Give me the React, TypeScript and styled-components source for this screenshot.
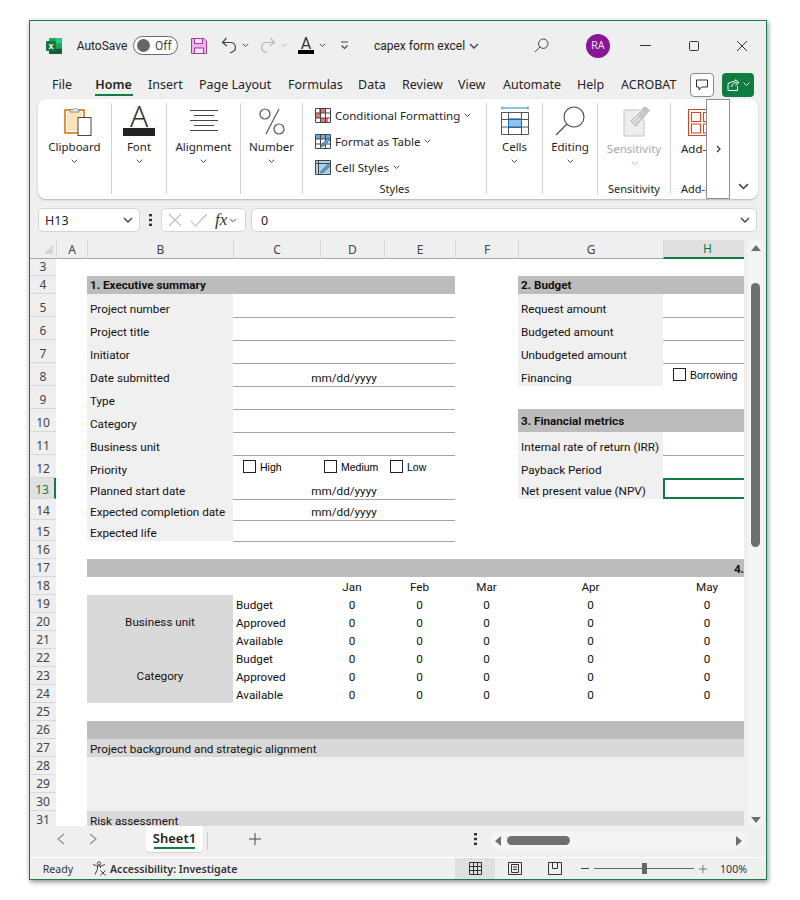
import styled, { createGlobalStyle } from 'styled-components'

const UI_FONT = '"Noto Sans", "Open Sans", sans-serif'
const SHEET_FONT = 'Roboto, "Noto Sans", sans-serif'
const GREEN = '#107c41'

const GlobalStyle = createGlobalStyle`
  html, body { margin: 0; background: #fff; }
  body { font-family: ${UI_FONT}; color: #242424; }
  * { box-sizing: border-box; }
`

const Page = styled.div`
  padding: 20px 33px 20px 29px;
`

const Window = styled.div`
  width: 738px;
  height: 860px;
  background: #efefef;
  border: 1px solid #1f7a4a;
  box-shadow: 1px 2px 5px rgba(0, 0, 0, 0.45);
  display: flex;
  flex-direction: column;
`

/* title bar */
const TitleBar = styled.div`
  height: 49px;
  display: flex;
  align-items: center;
  font-family: ${SHEET_FONT};
  font-size: 12px;
`

const Slot = styled.div<{ $ml: number; $w?: number }>`
  margin-left: ${(p) => p.$ml}px;
  ${(p) => (p.$w ? `width: ${p.$w}px;` : '')}
  flex: none;
  display: flex;
  align-items: center;
  justify-content: center;
  white-space: nowrap;
`

const Toggle = styled.div`
  width: 45px;
  height: 19px;
  border: 1px solid #6a6a6a;
  border-radius: 10px;
  background: #fff;
  display: flex;
  align-items: center;
  padding: 0 3px;
  gap: 5px;
  font-size: 12px;
  color: #444;
`

const ToggleKnob = styled.span`
  width: 13px;
  height: 13px;
  border-radius: 50%;
  background: #666;
`

const FontColorIcon = styled.div`
  width: 16px;
  display: flex;
  flex-direction: column;
  align-items: center;
`

const FontColorLetter = styled.span`
  font-size: 16px;
  line-height: 13px;
  color: #333;
`

const ColorBar = styled.span`
  width: 100%;
  height: 4px;
  background: #000;
`

const Avatar = styled.div`
  width: 24px;
  height: 24px;
  border-radius: 50%;
  background: #881798;
  color: #f3dcf6;
  font-size: 10.5px;
  display: flex;
  align-items: center;
  justify-content: center;
`

/* ribbon tabs */
const TabBar = styled.div`
  height: 29px;
  display: flex;
  align-items: center;
  font-size: 12.5px;
`

const RibbonTab = styled.div<{ $ml: number; $w: number; $active?: boolean }>`
  position: relative;
  margin-left: ${(p) => p.$ml}px;
  width: ${(p) => p.$w}px;
  flex: none;
  height: 29px;
  line-height: 30px;
  text-align: center;
  white-space: nowrap;
  font-weight: ${(p) => (p.$active ? 600 : 400)};

  ${(p) =>
    p.$active
      ? `&::after {
          content: '';
          position: absolute;
          left: 0;
          right: -1px;
          bottom: 3px;
          height: 2px;
          background: ${GREEN};
        }`
      : ''}
`

const CommentButton = styled.div`
  margin-left: 14px;
  width: 24px;
  height: 24px;
  background: #fff;
  border: 1px solid #8a8a8a;
  border-radius: 4px;
  display: flex;
  align-items: center;
  justify-content: center;
`

const ShareButton = styled.div`
  margin-left: 8px;
  width: 32px;
  height: 24px;
  background: ${GREEN};
  border-radius: 4px;
  display: flex;
  align-items: center;
  justify-content: center;
  gap: 3px;
`

/* ribbon */
const Ribbon = styled.div`
  position: relative;
  height: 100px;
  margin: 0 8px;
  padding: 4px 0 5px;
  background: #fff;
  border-radius: 8px;
  box-shadow: 0 1px 2px rgba(0, 0, 0, 0.25);
  display: flex;
`

const RibbonGroup = styled.div<{ $w: number; $start?: boolean; $last?: boolean }>`
  width: ${(p) => p.$w}px;
  flex: none;
  display: flex;
  flex-direction: column;
  align-items: ${(p) => (p.$start ? 'flex-start' : 'center')};
  padding-left: ${(p) => (p.$start ? '10px' : '0')};
  border-right: ${(p) => (p.$last ? 'none' : '1px solid #d2d2d2')};
  font-size: 11.5px;
`

const GroupIcon = styled.div<{ $tall?: boolean; $inset?: number }>`
  height: ${(p) => (p.$tall ? 38 : 36)}px;
  padding-left: ${(p) => p.$inset ?? 0}px;
  display: flex;
  align-items: center;
  justify-content: center;
`

const GroupText = styled.div<{ $muted?: boolean }>`
  line-height: 16px;
  white-space: nowrap;
  color: ${(p) => (p.$muted ? '#a8a8a8' : '#242424')};
`

const GroupChevron = styled.div`
  height: 12px;
  display: flex;
  align-items: center;
  justify-content: center;
`

const GroupName = styled.div`
  margin-top: auto;
  margin-bottom: -3px;
  line-height: 16px;
  font-size: 11px;
  white-space: nowrap;
`

const BigLetterIcon = styled.div`
  width: 32px;
  height: 30px;
  display: flex;
  flex-direction: column;
  align-items: center;
  justify-content: flex-end;
`

const BigLetter = styled.span`
  font-size: 30px;
  line-height: 30px;
  margin: -5px 0 -3px;
  font-weight: 300;
  color: #333;
`

const BigBar = styled.span`
  width: 100%;
  height: 8px;
  background: #222;
  flex: none;
`

const StyleList = styled.div`
  display: flex;
  flex-direction: column;
  width: 100%;
  padding: 2px 0 0 12px;
  gap: 6px;
`

const StyleRow = styled.div`
  height: 20px;
  display: flex;
  align-items: center;
  gap: 4px;
  white-space: nowrap;
`

const RibbonOverflow = styled.div`
  position: absolute;
  left: 668px;
  top: 0;
  width: 24px;
  height: 100px;
  background: #fff;
  border: 1px solid #8f8f8f;
  display: flex;
  align-items: center;
  justify-content: center;
`

const CollapseButton = styled.div`
  position: absolute;
  right: 9px;
  bottom: 9px;
  display: flex;
`

/* formula bar */
const FormulaBar = styled.div`
  height: 24px;
  margin: 9px 9px 0 8px;
  display: flex;
  align-items: stretch;
  font-size: 12.5px;
`

const FieldBox = styled.div<{ $w?: number; $ml?: number }>`
  ${(p) => (p.$w ? `width: ${p.$w}px; flex: none;` : 'flex: 1;')}
  margin-left: ${(p) => p.$ml ?? 0}px;
  background: #fff;
  border: 1px solid #d4d4d4;
  border-radius: 5px;
  display: flex;
  align-items: center;
  padding: 0 6px;
`

const FieldValue = styled.span<{ $inset?: number }>`
  flex: 1;
  padding-left: ${(p) => p.$inset ?? 0}px;
`

const FormulaDots = styled.div`
  width: 21px;
  flex: none;
  display: flex;
  align-items: center;
  justify-content: center;
`

const FxMark = styled.span`
  font-family: 'Liberation Serif', serif;
  font-style: italic;
  font-size: 17px;
  color: #333;
  margin: 0 2px 0 8px;
`

/* sheet */
const SheetArea = styled.div`
  height: 586px;
  margin-top: 8px;
  display: flex;
`

const GridViewport = styled.div`
  width: 714px;
  flex: none;
  overflow: hidden;
  background: #fff;
`

const columns = ['A', 'B', 'C', 'D', 'E', 'F', 'G', 'H']

const rowHeights: Record<number, number> = {
  3: 17, 4: 18, 5: 23, 6: 23, 7: 23, 8: 23, 9: 23, 10: 23, 11: 23, 12: 23, 13: 21, 14: 21, 15: 21,
  16: 18, 17: 18, 18: 18, 19: 18, 20: 18, 21: 18, 22: 18, 23: 18, 24: 18, 25: 18, 26: 18, 27: 18,
  28: 18, 29: 18, 30: 18, 31: 18,
}

const rowNumbers = Object.keys(rowHeights).map(Number)

const SheetGrid = styled.div`
  display: grid;
  width: 721px;
  grid-template-columns: 26px 31px 146px 87px 64px 71px 63px 145px 88px;
  grid-template-rows: 19px ${rowNumbers.map((r) => `${rowHeights[r]}px`).join(' ')};
  font-family: ${SHEET_FONT};
  font-size: 11.7px;
  color: #111;
`

const colLine = (col: string) => columns.indexOf(col) + 2
const rowLine = (row: number) => row - 1

const CornerCell = styled.div`
  grid-row: 1;
  grid-column: 1;
  background: #efefef;
  border-bottom: 1px solid #a8a8a8;
  display: flex;
  align-items: flex-end;
  justify-content: flex-end;
  padding: 0 3px 4px 0;
`

const CornerMark = styled.span`
  width: 0;
  height: 0;
  border-left: 9px solid transparent;
  border-bottom: 9px solid #d6d6d6;
`

const ColHead = styled.div<{ $col: string; $active?: boolean }>`
  grid-row: 1;
  grid-column: ${(p) => colLine(p.$col)};
  background: ${(p) => (p.$active ? '#e0e0e0' : '#efefef')};
  border-bottom: ${(p) => (p.$active ? `2px solid ${GREEN}` : '1px solid #a8a8a8')};
  border-left: 1px solid #d8d8d8;
  color: ${(p) => (p.$active ? GREEN : '#444')};
  font-family: ${UI_FONT};
  font-size: 12px;
  display: flex;
  align-items: center;
  justify-content: center;
`

const RowHead = styled.div<{ $row: number; $active?: boolean }>`
  grid-row: ${(p) => rowLine(p.$row)};
  grid-column: 1;
  background: ${(p) => (p.$active ? '#e0e0e0' : '#efefef')};
  border-bottom: 1px solid #d8d8d8;
  border-right: ${(p) => (p.$active ? `2px solid ${GREEN}` : 'none')};
  color: ${(p) => (p.$active ? GREEN : '#444')};
  font-family: ${UI_FONT};
  font-size: 12px;
  line-height: 16px;
  display: flex;
  align-items: flex-end;
  justify-content: center;
  overflow: hidden;
`

type Tone = 'none' | 'head' | 'label' | 'mid' | 'fill'

const toneColors: Record<Tone, string> = {
  none: 'transparent',
  head: '#bcbcbc',
  label: '#f0f0f0',
  mid: '#d9d9d9',
  fill: '#f0f0f0',
}

const Cell = styled.div<{
  $row: number
  $col: string
  $to?: string
  $rows?: number
  $tone?: Tone
  $line?: boolean
  $align?: 'left' | 'center' | 'right'
  $middle?: boolean
  $bold?: boolean
  $padRight?: number
}>`
  grid-row: ${(p) => rowLine(p.$row)} / span ${(p) => p.$rows ?? 1};
  grid-column: ${(p) => colLine(p.$col)} / ${(p) => colLine(p.$to ?? p.$col) + 1};
  background: ${(p) => toneColors[p.$tone ?? 'none']};
  box-shadow: ${(p) => (p.$line ? '0 1px 0 #a3a3a3' : 'none')};
  display: flex;
  align-items: ${(p) => (p.$middle ? 'center' : 'flex-end')};
  justify-content: ${(p) =>
    p.$align === 'center' ? 'center' : p.$align === 'right' ? 'flex-end' : 'flex-start'};
  padding: 0 ${(p) => p.$padRight ?? 3}px 0 3px;
  line-height: 16px;
  font-weight: ${(p) => (p.$bold ? 700 : 400)};
  white-space: nowrap;
  overflow: hidden;
`

const SelectedCell = styled.div`
  grid-row: ${rowLine(13)};
  grid-column: ${colLine('H')};
  border: 2px solid ${GREEN};
`

const CheckList = styled.div<{ $row: number; $col: string; $to: string; $pad: number }>`
  grid-row: ${(p) => rowLine(p.$row)};
  grid-column: ${(p) => colLine(p.$col)} / ${(p) => colLine(p.$to) + 1};
  padding: 5px 0 0 ${(p) => p.$pad}px;
  display: flex;
  align-items: flex-start;
`

const CheckItem = styled.div<{ $w?: number }>`
  ${(p) => (p.$w ? `width: ${p.$w}px;` : '')}
  flex: none;
  display: flex;
  align-items: center;
  gap: 4px;
  font-family: 'Liberation Sans', sans-serif;
  font-size: 10.5px;
  color: #000;
`

const CheckBox = styled.span`
  width: 13px;
  height: 13px;
  background: #fff;
  border: 1px solid #222;
  flex: none;
`

/* vertical scrollbar */
const VScroll = styled.div`
  flex: 1;
  padding: 0 3px 0 4px;
`

const VTrack = styled.div`
  height: 587px;
  background: #f5f5f5;
  border-radius: 8px;
  display: flex;
  flex-direction: column;
  align-items: center;
  padding-top: 5px;
`

const Triangle = styled.span<{ $dir: 'up' | 'down' | 'left' | 'right' }>`
  width: 0;
  height: 0;
  flex: none;
  ${(p) =>
    p.$dir === 'up'
      ? 'border-left: 5px solid transparent; border-right: 5px solid transparent; border-bottom: 6px solid #6f6f6f;'
      : p.$dir === 'down'
        ? 'border-left: 5px solid transparent; border-right: 5px solid transparent; border-top: 6px solid #6f6f6f;'
        : p.$dir === 'left'
          ? 'border-top: 5px solid transparent; border-bottom: 5px solid transparent; border-right: 6px solid #6f6f6f;'
          : 'border-top: 5px solid transparent; border-bottom: 5px solid transparent; border-left: 6px solid #6f6f6f;'}
`

const VThumb = styled.div`
  width: 9px;
  height: 264px;
  margin-top: 32px;
  background: #6f6f6f;
  border-radius: 5px;
`

const VDown = styled.div`
  margin-top: auto;
  margin-bottom: 4px;
  display: flex;
`

/* sheet tabs */
const TabStrip = styled.div`
  height: 31px;
  display: flex;
  align-items: flex-start;
`

const StripSlot = styled.div<{ $ml: number; $w: number }>`
  margin-left: ${(p) => p.$ml}px;
  width: ${(p) => p.$w}px;
  height: 26px;
  flex: none;
  display: flex;
  align-items: center;
  justify-content: center;
`

const SheetTab = styled.div`
  position: relative;
  margin-left: 49px;
  width: 57px;
  height: 26px;
  flex: none;
  background: #fff;
  border-radius: 0 0 4px 4px;
  box-shadow: 0 1px 1px rgba(0, 0, 0, 0.12);
  font-size: 13px;
  font-weight: 600;
  text-align: center;
  line-height: 24px;

  &::after {
    content: '';
    position: absolute;
    left: 8px;
    right: 8px;
    bottom: 3px;
    height: 2px;
    background: ${GREEN};
  }
`

const StripDivider = styled.div`
  margin: 6px 0 0 4px;
  width: 1px;
  height: 18px;
  background: #c8c8c8;
  flex: none;
`

const HScroll = styled.div`
  margin: 6px 0 0 13px;
  width: 257px;
  height: 17px;
  flex: none;
  background: #f5f5f5;
  border-radius: 9px;
  display: flex;
  align-items: center;
  padding: 0 5px;
`

const HThumb = styled.div`
  width: 63px;
  height: 9px;
  margin-left: 6px;
  background: #6f6f6f;
  border-radius: 5px;
`

const HRight = styled.div`
  margin-left: auto;
  display: flex;
`

/* status bar */
const StatusBar = styled.div`
  height: 22px;
  border-top: 1px solid #fff;
  display: flex;
  align-items: center;
  font-size: 10.6px;
  color: #333;
  flex: none;
`

const StatusStrong = styled.span`
  font-weight: 600;
`

const StatusRight = styled.div`
  margin-left: auto;
  padding-right: 19px;
  display: flex;
  align-items: center;
  height: 100%;
`

const ViewButton = styled.div<{ $active?: boolean }>`
  width: 40px;
  height: 100%;
  background: ${(p) => (p.$active ? '#e0e0e0' : 'transparent')};
  display: flex;
  align-items: center;
  justify-content: center;
`

const ZoomSlider = styled.div`
  position: relative;
  margin-left: 5px;
  width: 100px;
  height: 1px;
  background: #666;
`

const ZoomThumb = styled.span`
  position: absolute;
  left: 48px;
  top: -5px;
  width: 5px;
  height: 11px;
  background: #666;
`

const Chevron = ({ size = 7, color = '#444' }: { size?: number; color?: string }) => (
  <svg width={size} height={size * 0.6} viewBox="0 0 10 6" fill="none">
    <path d="M1 1l4 4 4-4" stroke={color} strokeWidth={1.4} />
  </svg>
)

const ExcelLogo = () => (
  <svg width="16" height="16" viewBox="0 0 16 16">
    <rect x="3" y="0" width="13" height="16" rx="1" fill="#21a366" />
    <rect x="9.5" y="0" width="6.5" height="5.3" fill="#33c481" />
    <rect x="3" y="5.3" width="6.5" height="5.4" fill="#107c41" />
    <rect x="3" y="10.7" width="13" height="5.3" fill="#185c37" />
    <rect x="0" y="3" width="10" height="10" rx="1" fill="#0f7a3f" />
    <text x="5" y="11" textAnchor="middle" fontSize="9" fontWeight="700" fill="#fff" fontFamily="Liberation Sans">
      x
    </text>
  </svg>
)

const SaveIcon = () => (
  <svg width="16" height="16" viewBox="0 0 16 16">
    <path d="M.5.5h12.5l2.5 2.5v12.5H.5z" fill="#e7b9e7" stroke="#a43aa4" />
    <rect x="3.5" y="0.5" width="8" height="5" fill="#f5e3f5" stroke="#a43aa4" />
    <rect x="3.5" y="10" width="9" height="5.5" fill="#f5e3f5" stroke="#a43aa4" />
  </svg>
)

const UndoIcon = ({ color }: { color: string }) => (
  <svg width="16" height="17" viewBox="0 0 16 17" fill="none">
    <path d="M5.5 1L1.5 5.5 6 9" stroke={color} strokeWidth={1.2} />
    <path d="M1.5 5.5H9.5a4.8 4.8 0 0 1 2 9.2L9 16" stroke={color} strokeWidth={1.2} />
  </svg>
)

const RedoIcon = ({ color }: { color: string }) => (
  <svg width="16" height="17" viewBox="0 0 16 17" fill="none">
    <path d="M10.5 1l4 4.5L10 9" stroke={color} strokeWidth={1.2} />
    <path d="M14.5 5.5H6.5a4.8 4.8 0 0 0-2 9.2L7 16" stroke={color} strokeWidth={1.2} />
  </svg>
)

const CustomizeIcon = () => (
  <svg width="9" height="9" viewBox="0 0 9 9" fill="none">
    <path d="M1 1h7M1.5 4.5l3 3 3-3" stroke="#444" strokeWidth={1.1} />
  </svg>
)

const SearchIcon = () => (
  <svg width="15" height="15" viewBox="0 0 15 15" fill="none">
    <circle cx="9.3" cy="5.7" r="4.7" stroke="#444" />
    <path d="M5.8 9L1 14" stroke="#444" />
  </svg>
)

const CommentIcon = () => (
  <svg width="12" height="12" viewBox="0 0 12 12" fill="none">
    <path d="M.5 1h11v7H5.5L3 11V8H.5z" stroke="#333" />
  </svg>
)

const ShareIcon = () => (
  <svg width="13" height="13" viewBox="0 0 13 13" fill="none">
    <path d="M9 2.5L1 5.5v7h9.5V8" stroke="#fff" />
    <path d="M4.5 9c.5-3 2.5-4.5 6-4.5M8.5 1.5l3.5 3-3.5 3" stroke="#fff" />
  </svg>
)

const ClipboardIcon = () => (
  <svg width="28" height="30" viewBox="0 0 28 30">
    <rect x="1" y="4" width="19" height="23" fill="#fff" stroke="#d9760f" strokeWidth={1.6} />
    <rect x="3" y="6" width="15" height="19" fill="#fbe3b8" />
    <path d="M6 6V3.5h3.5a2 2 0 0 1 3.5 0H15V6z" fill="#eee" stroke="#888" />
    <rect x="14" y="11.5" width="13" height="18" fill="#fff" stroke="#444" />
  </svg>
)

const AlignmentIcon = () => (
  <svg width="28" height="22" viewBox="0 0 28 22" stroke="#444">
    <path d="M0 .5h28M4 5.5h20M0 10.5h28M4 15.5h20M0 20.5h28" />
  </svg>
)

const PercentIcon = () => (
  <svg width="26" height="27" viewBox="0 0 26 27" fill="none" stroke="#555" strokeWidth={1.2}>
    <circle cx="6" cy="6" r="5" />
    <circle cx="20" cy="21" r="5" />
    <path d="M20 1L7 26" />
  </svg>
)

const CondFormatIcon = () => (
  <svg width="16" height="15" viewBox="0 0 16 15">
    <rect x="4" y="1" width="7" height="4" fill="#f26d6d" />
    <rect x="6" y="10" width="7" height="4" fill="#f26d6d" />
    <rect x="1" y="5" width="4" height="5" fill="#f26d6d" />
    <path d="M.5.5h15v14H.5zM.5 5h15M.5 10h15M5.5.5v14M10.5.5v14" fill="none" stroke="#444" />
  </svg>
)

const TableIcon = ({ solid }: { solid?: boolean }) => (
  <svg width="16" height="15" viewBox="0 0 16 15">
    <rect x="1" y="1" width="14" height="13" fill={solid ? '#a9d2f3' : '#fff'} />
    {!solid && <rect x="1" y="1" width="14" height="4" fill="#6aa9dc" />}
    <path
      d={solid ? 'M.5.5h15v14H.5zM.5 3.5h15M3.5.5v14' : 'M.5.5h15v14H.5zM.5 5h15M.5 10h15M5.5.5v14M10.5.5v14'}
      fill="none"
      stroke="#444"
    />
    <path d="M5 13l2-3 6-6 2 2-6 6z" fill="#5b9bd5" stroke="#555" strokeWidth={0.6} />
  </svg>
)

const CellsIcon = () => (
  <svg width="28" height="30" viewBox="0 0 28 30">
    <path d="M1 .5v3M27 .5v3M1 2h26" stroke="#1e8bcd" fill="none" />
    <rect x="7" y="12.5" width="14" height="9.5" fill="#90c4ed" />
    <path d="M.5 6.5h27v22H.5zM.5 13.5h27M.5 21h27M7.5 6.5v22M20.5 6.5v22" fill="none" stroke="#555" />
    <rect x="7.5" y="13" width="13" height="8.5" fill="none" stroke="#1b6fb0" />
  </svg>
)

const EditingIcon = () => (
  <svg width="30" height="30" viewBox="0 0 30 30" fill="none" stroke="#444" strokeWidth={1.1}>
    <circle cx="19" cy="11" r="10" />
    <path d="M12 18L1 29" />
  </svg>
)

const SensitivityIcon = () => (
  <svg width="28" height="30" viewBox="0 0 28 30">
    <rect x="1" y="3" width="20" height="26" fill="#ededed" stroke="#c4c4c4" />
    <path d="M6 14L18 3l6 5-11 13z" fill="#c9c9c9" stroke="#fff" />
    <rect x="19" y="0" width="7" height="6" fill="#c2c2c2" transform="rotate(40 22 3)" />
    <path d="M9 15l6-6M11 17l6-6" stroke="#fff" />
  </svg>
)

const AddInsIcon = () => (
  <svg width="28" height="30" viewBox="0 0 28 30" fill="none" stroke="#d24726" strokeWidth={1.1}>
    <path d="M.5 2.5h27v26H.5z" />
    <path d="M3.5 5.5h9v9h-9zM15.5 5.5h9v9h-9zM3.5 17h9v9h-9zM15.5 17h9v9h-9z" />
  </svg>
)

const DotsIcon = () => (
  <svg width="3" height="12" viewBox="0 0 3 12" fill="#333">
    <rect width="3" height="2.4" />
    <rect y="4.8" width="3" height="2.4" />
    <rect y="9.6" width="3" height="2.4" />
  </svg>
)

const CancelEnterIcons = () => (
  <svg width="39" height="14" viewBox="0 0 39 14" fill="none" stroke="#bdbdbd" strokeWidth={1.1}>
    <path d="M1 1l12 12M13 1L1 13M23 8l4.5 5L39 1" />
  </svg>
)

const NavChevron = ({ dir }: { dir: 'left' | 'right' }) => (
  <svg width="8" height="12" viewBox="0 0 8 12" fill="none" stroke="#8a8a8a" strokeWidth={1.1}>
    <path d={dir === 'left' ? 'M7 1L1 6l6 5' : 'M1 1l6 5-6 5'} />
  </svg>
)

const PlusIcon = ({ size = 12 }: { size?: number }) => (
  <svg width={size} height={size} viewBox="0 0 12 12" stroke="#444">
    <path d="M6 0v12M0 6h12" />
  </svg>
)

const AccessibilityIcon = () => (
  <svg width="15" height="15" viewBox="0 0 15 15" fill="none" stroke="#333" strokeWidth={0.9}>
    <circle cx="7" cy="2.4" r="1.6" />
    <path d="M1 3.5l4 1.5h4l4-1.5M5.5 5v3L3 13.5M8.5 5v2" />
    <path d="M8.5 9.5l5 5M13.5 9.5l-5 5" />
  </svg>
)

const NormalViewIcon = () => (
  <svg width="13" height="13" viewBox="0 0 13 13" fill="none" stroke="#333">
    <path d="M.5.5h12v12H.5zM.5 4.5h12M.5 8.5h12M4.5.5v12M8.5.5v12" />
  </svg>
)

const LayoutViewIcon = () => (
  <svg width="14" height="13" viewBox="0 0 14 13" fill="none" stroke="#333">
    <path d="M.5.5h13v12H.5zM3.5 2.5h7v8h-7zM5 5h4M5 7.5h4" />
  </svg>
)

const BreakViewIcon = () => (
  <svg width="14" height="13" viewBox="0 0 14 13" fill="none" stroke="#333">
    <path d="M.5.5h13v12H.5zM4.5.5v6h5v-6" />
  </svg>
)

const titleTabs = [
  { label: 'File', ml: 22, w: 19 },
  { label: 'Home', ml: 24, w: 37, active: true },
  { label: 'Insert', ml: 16, w: 32 },
  { label: 'Page Layout', ml: 19, w: 71 },
  { label: 'Formulas', ml: 18, w: 53 },
  { label: 'Data', ml: 17, w: 27 },
  { label: 'Review', ml: 17, w: 40 },
  { label: 'View', ml: 16, w: 27 },
  { label: 'Automate', ml: 18, w: 55 },
  { label: 'Help', ml: 19, w: 27 },
  { label: 'ACROBAT', ml: 17, w: 55 },
]

const execRows = [
  { row: 5, label: 'Project number' },
  { row: 6, label: 'Project title' },
  { row: 7, label: 'Initiator' },
  { row: 8, label: 'Date submitted', value: 'mm/dd/yyyy' },
  { row: 9, label: 'Type' },
  { row: 10, label: 'Category' },
  { row: 11, label: 'Business unit' },
  { row: 13, label: 'Planned start date', value: 'mm/dd/yyyy' },
  { row: 14, label: 'Expected completion date', value: 'mm/dd/yyyy' },
  { row: 15, label: 'Expected life' },
]

const budgetRows = [
  { row: 5, label: 'Request amount', line: true },
  { row: 6, label: 'Budgeted amount', line: true },
  { row: 7, label: 'Unbudgeted amount', line: true },
  { row: 8, label: 'Financing' },
  { row: 11, label: 'Internal rate of return (IRR)', line: true },
  { row: 12, label: 'Payback Period' },
  { row: 13, label: 'Net present value (NPV)' },
]

const months = [
  { col: 'D', label: 'Jan' },
  { col: 'E', label: 'Feb' },
  { col: 'F', label: 'Mar' },
  { col: 'G', label: 'Apr' },
  { col: 'H', label: 'May' },
]

const measures = ['Budget', 'Approved', 'Available', 'Budget', 'Approved', 'Available']

const SheetCells = () => (
  <SheetGrid>
    <CornerCell>
      <CornerMark />
    </CornerCell>
    {columns.map((c) => (
      <ColHead key={c} $col={c} $active={c === 'H'}>
        {c}
      </ColHead>
    ))}
    {rowNumbers.map((r) => (
      <RowHead key={r} $row={r} $active={r === 13}>
        {r}
      </RowHead>
    ))}

    <Cell $row={4} $col="B" $to="E" $tone="head" $bold $middle>
      1. Executive summary
    </Cell>
    {execRows.map(({ row, label, value }) => [
      <Cell key={`l${row}`} $row={row} $col="B" $tone="label">
        {label}
      </Cell>,
      <Cell key={`v${row}`} $row={row} $col="C" $to="E" $line $align="center">
        {value}
      </Cell>,
    ])}
    <Cell $row={12} $col="B" $tone="label">
      Priority
    </Cell>
    <CheckList $row={12} $col="C" $to="E" $pad={10}>
      <CheckItem $w={81}>
        <CheckBox />
        High
      </CheckItem>
      <CheckItem $w={66}>
        <CheckBox />
        Medium
      </CheckItem>
      <CheckItem>
        <CheckBox />
        Low
      </CheckItem>
    </CheckList>

    <Cell $row={4} $col="G" $to="H" $tone="head" $bold $middle>
      2. Budget
    </Cell>
    <Cell $row={10} $col="G" $to="H" $tone="head" $bold $middle>
      3. Financial metrics
    </Cell>
    {budgetRows.map(({ row, label, line }) => [
      <Cell key={`b${row}`} $row={row} $col="G" $tone="label">
        {label}
      </Cell>,
      line ? <Cell key={`bv${row}`} $row={row} $col="H" $line /> : null,
    ])}
    <CheckList $row={8} $col="H" $to="H" $pad={10}>
      <CheckItem>
        <CheckBox />
        Borrowing
      </CheckItem>
    </CheckList>
    <SelectedCell />

    <Cell $row={17} $col="B" $to="H" $tone="head" $bold $align="right" $padRight={7}>
      4.
    </Cell>
    {months.map((m) => (
      <Cell key={m.col} $row={18} $col={m.col} $align="center">
        {m.label}
      </Cell>
    ))}
    <Cell $row={19} $col="B" $rows={3} $tone="mid" $align="center" $middle>
      Business unit
    </Cell>
    <Cell $row={22} $col="B" $rows={3} $tone="mid" $align="center" $middle>
      Category
    </Cell>
    {measures.map((label, i) => [
      <Cell key={`m${i}`} $row={19 + i} $col="C">
        {label}
      </Cell>,
      ...months.map((m) => (
        <Cell key={`z${i}${m.col}`} $row={19 + i} $col={m.col} $align="center">
          0
        </Cell>
      )),
    ])}

    <Cell $row={26} $col="B" $to="H" $tone="head" />
    <Cell $row={27} $col="B" $to="H" $tone="mid">
      Project background and strategic alignment
    </Cell>
    <Cell $row={28} $col="B" $to="H" $rows={3} $tone="fill" />
    <Cell $row={31} $col="B" $to="H" $tone="mid">
      Risk assessment
    </Cell>
  </SheetGrid>
)

export default function App() {
  return (
    <Page>
      <GlobalStyle />
      <Window>
        <TitleBar>
          <Slot $ml={16}>
            <ExcelLogo />
          </Slot>
          <Slot $ml={16} $w={48}>
            AutoSave
          </Slot>
          <Slot $ml={7}>
            <Toggle>
              <ToggleKnob />
              Off
            </Toggle>
          </Slot>
          <Slot $ml={13}>
            <SaveIcon />
          </Slot>
          <Slot $ml={14}>
            <UndoIcon color="#444" />
          </Slot>
          <Slot $ml={5}>
            <Chevron />
          </Slot>
          <Slot $ml={11}>
            <RedoIcon color="#b8b8b8" />
          </Slot>
          <Slot $ml={5}>
            <Chevron color="#b8b8b8" />
          </Slot>
          <Slot $ml={10}>
            <FontColorIcon>
              <FontColorLetter>A</FontColorLetter>
              <ColorBar />
            </FontColorIcon>
          </Slot>
          <Slot $ml={5}>
            <Chevron />
          </Slot>
          <Slot $ml={14}>
            <CustomizeIcon />
          </Slot>
          <Slot $ml={25} $w={91}>
            capex form excel
          </Slot>
          <Slot $ml={4}>
            <Chevron size={10} />
          </Slot>
          <Slot $ml={55}>
            <SearchIcon />
          </Slot>
          <Slot $ml={37}>
            <Avatar>RA</Avatar>
          </Slot>
          <Slot $ml={30}>
            <svg width="11" height="1" viewBox="0 0 11 1">
              <rect width="11" height="1" fill="#333" />
            </svg>
          </Slot>
          <Slot $ml={38}>
            <svg width="10" height="10" viewBox="0 0 10 10" fill="none" stroke="#333">
              <rect x=".5" y=".5" width="9" height="9" rx="1" />
            </svg>
          </Slot>
          <Slot $ml={38}>
            <svg width="10" height="10" viewBox="0 0 10 10" fill="none" stroke="#333">
              <path d="M0 0l10 10M10 0L0 10" />
            </svg>
          </Slot>
        </TitleBar>

        <TabBar>
          {titleTabs.map((t) => (
            <RibbonTab key={t.label} $ml={t.ml} $w={t.w} $active={t.active}>
              {t.label}
            </RibbonTab>
          ))}
          <CommentButton>
            <CommentIcon />
          </CommentButton>
          <ShareButton>
            <ShareIcon />
            <Chevron size={7} color="#fff" />
          </ShareButton>
        </TabBar>

        <Ribbon>
          <RibbonGroup $w={74}>
            <GroupIcon $inset={7}>
              <ClipboardIcon />
            </GroupIcon>
            <GroupText>Clipboard</GroupText>
            <GroupChevron>
              <Chevron />
            </GroupChevron>
          </RibbonGroup>
          <RibbonGroup $w={55}>
            <GroupIcon>
              <BigLetterIcon>
                <BigLetter>A</BigLetter>
                <BigBar />
              </BigLetterIcon>
            </GroupIcon>
            <GroupText>Font</GroupText>
            <GroupChevron>
              <Chevron />
            </GroupChevron>
          </RibbonGroup>
          <RibbonGroup $w={74}>
            <GroupIcon>
              <AlignmentIcon />
            </GroupIcon>
            <GroupText>Alignment</GroupText>
            <GroupChevron>
              <Chevron />
            </GroupChevron>
          </RibbonGroup>
          <RibbonGroup $w={62}>
            <GroupIcon>
              <PercentIcon />
            </GroupIcon>
            <GroupText>Number</GroupText>
            <GroupChevron>
              <Chevron />
            </GroupChevron>
          </RibbonGroup>
          <RibbonGroup $w={184}>
            <StyleList>
              <StyleRow>
                <CondFormatIcon />
                Conditional Formatting
                <Chevron />
              </StyleRow>
              <StyleRow>
                <TableIcon />
                Format as Table
                <Chevron />
              </StyleRow>
              <StyleRow>
                <TableIcon solid />
                Cell Styles
                <Chevron />
              </StyleRow>
            </StyleList>
            <GroupName>Styles</GroupName>
          </RibbonGroup>
          <RibbonGroup $w={56}>
            <GroupIcon>
              <CellsIcon />
            </GroupIcon>
            <GroupText>Cells</GroupText>
            <GroupChevron>
              <Chevron />
            </GroupChevron>
          </RibbonGroup>
          <RibbonGroup $w={55}>
            <GroupIcon>
              <EditingIcon />
            </GroupIcon>
            <GroupText>Editing</GroupText>
            <GroupChevron>
              <Chevron />
            </GroupChevron>
          </RibbonGroup>
          <RibbonGroup $w={73}>
            <GroupIcon $tall $inset={5}>
              <SensitivityIcon />
            </GroupIcon>
            <GroupText $muted>Sensitivity</GroupText>
            <GroupChevron>
              <Chevron color="#b8b8b8" />
            </GroupChevron>
            <GroupName>Sensitivity</GroupName>
          </RibbonGroup>
          <RibbonGroup $w={70} $start $last>
            <GroupIcon $tall $inset={7}>
              <AddInsIcon />
            </GroupIcon>
            <GroupText>Add-ins</GroupText>
            <GroupName>Add-ins</GroupName>
          </RibbonGroup>
          <RibbonOverflow>
            <svg width="5" height="8" viewBox="0 0 5 8" fill="none" stroke="#333" strokeWidth={1.2}>
              <path d="M1 1l3 3-3 3" />
            </svg>
          </RibbonOverflow>
          <CollapseButton>
            <Chevron size={11} />
          </CollapseButton>
        </Ribbon>

        <FormulaBar>
          <FieldBox $w={102}>
            <FieldValue>H13</FieldValue>
            <Chevron size={10} />
          </FieldBox>
          <FormulaDots>
            <DotsIcon />
          </FormulaDots>
          <FieldBox $w={85}>
            <CancelEnterIcons />
            <FxMark>fx</FxMark>
            <Chevron size={8} color="#888" />
          </FieldBox>
          <FieldBox $ml={5}>
            <FieldValue $inset={3}>0</FieldValue>
            <Chevron size={10} />
          </FieldBox>
        </FormulaBar>

        <SheetArea>
          <GridViewport>
            <SheetCells />
          </GridViewport>
          <VScroll>
            <VTrack>
              <Triangle $dir="up" />
              <VThumb />
              <VDown>
                <Triangle $dir="down" />
              </VDown>
            </VTrack>
          </VScroll>
        </SheetArea>

        <TabStrip>
          <StripSlot $ml={27} $w={8}>
            <NavChevron dir="left" />
          </StripSlot>
          <StripSlot $ml={24} $w={8}>
            <NavChevron dir="right" />
          </StripSlot>
          <SheetTab>Sheet1</SheetTab>
          <StripDivider />
          <StripSlot $ml={41} $w={12}>
            <PlusIcon />
          </StripSlot>
          <StripSlot $ml={212} $w={4}>
            <DotsIcon />
          </StripSlot>
          <HScroll>
            <Triangle $dir="left" />
            <HThumb />
            <HRight>
              <Triangle $dir="right" />
            </HRight>
          </HScroll>
        </TabStrip>

        <StatusBar>
          <Slot $ml={13} $w={30}>
            Ready
          </Slot>
          <Slot $ml={19}>
            <AccessibilityIcon />
          </Slot>
          <Slot $ml={3}>
            <StatusStrong>Accessibility: Investigate</StatusStrong>
          </Slot>
          <StatusRight>
            <ViewButton $active>
              <NormalViewIcon />
            </ViewButton>
            <ViewButton>
              <LayoutViewIcon />
            </ViewButton>
            <ViewButton>
              <BreakViewIcon />
            </ViewButton>
            <Slot $ml={6}>
              <svg width="8" height="1" viewBox="0 0 8 1">
                <rect width="8" height="1" fill="#444" />
              </svg>
            </Slot>
            <ZoomSlider>
              <ZoomThumb />
            </ZoomSlider>
            <Slot $ml={5}>
              <PlusIcon size={8} />
            </Slot>
            <Slot $ml={13}>100%</Slot>
          </StatusRight>
        </StatusBar>
      </Window>
    </Page>
  )
}
